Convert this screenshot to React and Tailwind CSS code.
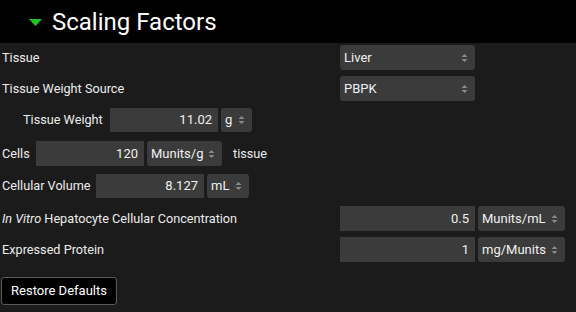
import React from "react";

const Arrows = () => (
  <svg width="7" height="10" viewBox="0 0 7 10" className="shrink-0">
    <polygon points="3.5,1 6.5,4 0.5,4" fill="#8a8a8a" />
    <polygon points="0.5,6 6.5,6 3.5,9" fill="#8a8a8a" />
  </svg>
);

const Select = ({ value, w, h = "h-[25px]" }) => (
  <div className={`${w} ${h} flex items-center justify-between rounded-[3px] bg-[#3b3b3b] pl-[4px] pr-[7px] text-[13px] text-[#f0f0f0]`}>
    <span>{value}</span>
    <Arrows />
  </div>
);

const Input = ({ value, w, h = "h-[25px]" }) => (
  <div className={`${w} ${h} flex items-center justify-end bg-[#3b3b3b] pr-[6px] text-[13px] text-[#f0f0f0]`}>
    {value}
  </div>
);

export default function App() {
  return (
    <div className="w-[576px] h-[312px] bg-[#1b1b1b] text-[12.7px] text-[#ececec] overflow-hidden" style={{ fontFamily: "Roboto, 'Liberation Sans', sans-serif" }}>
      <div className="h-[43px] bg-black flex items-center pl-[29px]">
        <svg width="13" height="7" viewBox="0 0 13 7" className="mt-[1px]">
          <polygon points="0,0 13,0 6.5,7" fill="#1fc21f" />
        </svg>
        <span className="ml-[10px] text-[24px] text-white leading-none">Scaling Factors</span>
      </div>

      <div className="mt-[2px] flex items-center h-[25px]">
        <span className="pl-[2px] w-[340px]">Tissue</span>
        <Select value="Liver" w="w-[135px]" />
      </div>

      <div className="mt-[6px] flex items-center h-[25px]">
        <span className="pl-[2px] w-[340px]">Tissue Weight Source</span>
        <Select value="PBPK" w="w-[135px]" />
      </div>

      <div className="mt-[7px] flex items-center h-[24px]">
        <span className="pl-[23px] w-[110px]">Tissue Weight</span>
        <Input value="11.02" w="w-[108px]" h="h-[24px]" />
        <div className="ml-[3px]">
          <Select value="g" w="w-[31px]" h="h-[24px]" />
        </div>
      </div>

      <div className="mt-[9px] flex items-center h-[25px]">
        <span className="pl-[2px] w-[36px]">Cells</span>
        <Input value="120" w="w-[108px]" />
        <div className="ml-[3px]">
          <Select value="Munits/g" w="w-[75px]" />
        </div>
        <span className="ml-[11px]">tissue</span>
      </div>

      <div className="mt-[8px] flex items-center h-[24px]">
        <span className="pl-[2px] w-[96px]">Cellular Volume</span>
        <Input value="8.127" w="w-[108px]" h="h-[24px]" />
        <div className="ml-[3px]">
          <Select value="mL" w="w-[42px]" h="h-[24px]" />
        </div>
      </div>

      <div className="mt-[8px] flex items-center h-[25px]">
        <span className="pl-[2px] w-[340px]">
          <i>In Vitro</i> Hepatocyte Cellular Concentration
        </span>
        <Input value="0.5" w="w-[135px]" />
        <div className="ml-[3px]">
          <Select value="Munits/mL" w="w-[87px]" />
        </div>
      </div>

      <div className="mt-[6px] flex items-center h-[25px]">
        <span className="pl-[2px] w-[340px]">Expressed Protein</span>
        <Input value="1" w="w-[135px]" />
        <div className="ml-[3px]">
          <Select value="mg/Munits" w="w-[87px]" />
        </div>
      </div>

      <div className="mt-[15px] pl-[1px]">
        <button className="h-[28px] w-[116px] rounded-[3px] border border-[#5a5a5a] bg-black text-[13px] text-white">
          Restore Defaults
        </button>
      </div>
    </div>
  );
}
